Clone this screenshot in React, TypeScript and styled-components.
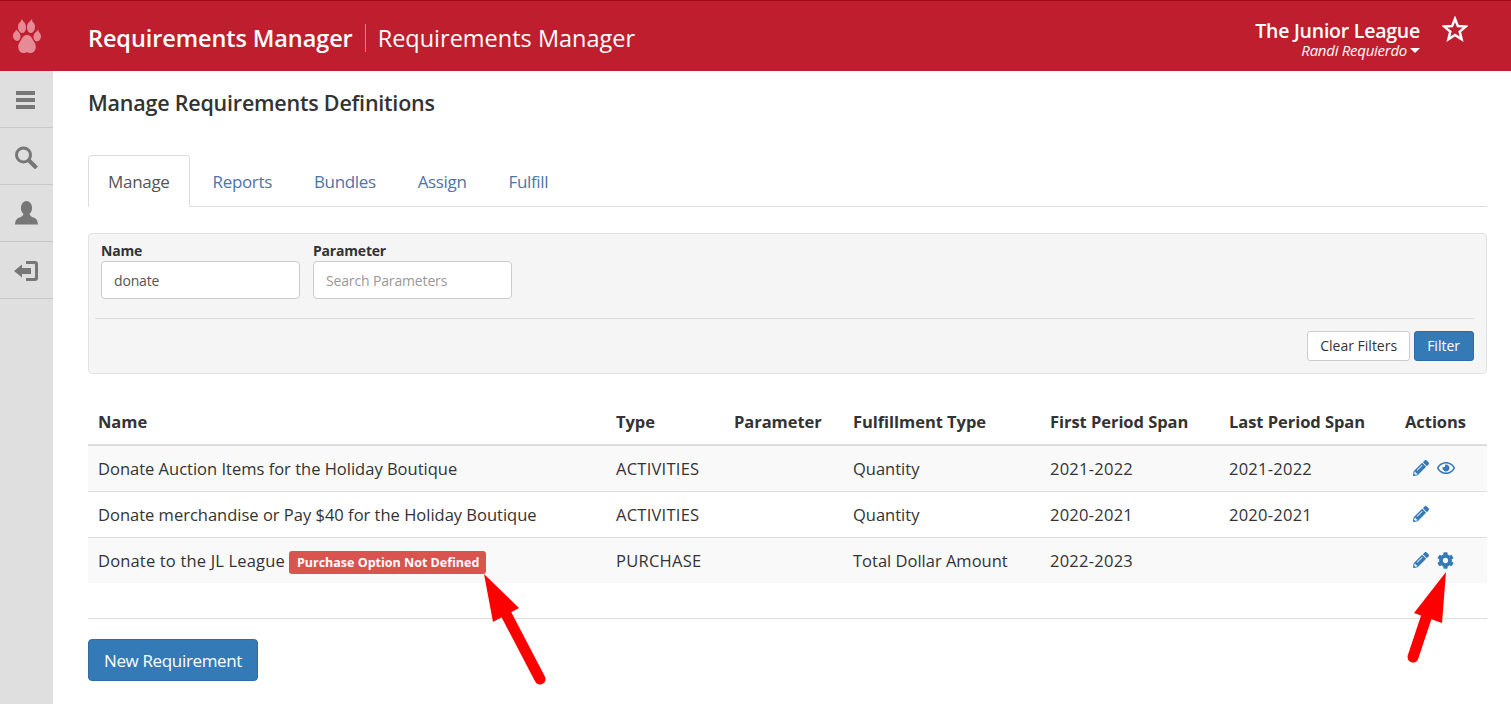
import React from 'react';
import styled, { createGlobalStyle } from 'styled-components';
import { FaRegEye, FaCog, FaPencilAlt } from 'react-icons/fa';

const Global = createGlobalStyle`
  html, body { margin: 0; padding: 0; background: #fff; }
  body { font-family: "Open Sans", "Noto Sans", "Liberation Sans", sans-serif; color: #333; font-size: 16px; }
  * { box-sizing: border-box; }
`;

const Page = styled.div`
  position: relative;
  width: 1511px;
  height: 704px;
  overflow: hidden;
  display: flex;
  flex-direction: column;
`;

const Header = styled.header`
  height: 71px;
  flex: none;
  background: #be1e2d;
  border-top: 1px solid #a00a12;
  display: flex;
  align-items: center;
  color: #fff;
`;

const LogoCell = styled.div`
  width: 53px;
  flex: none;
  display: flex;
  justify-content: center;
  padding-bottom: 1px;
`;

const Titles = styled.div`
  flex: 1;
  display: flex;
  align-items: center;
  padding-left: 35px;
  padding-top: 4px;
`;

const AppTitle = styled.span`
  font-size: 23.5px;
  font-weight: 600;
  letter-spacing: -0.1px;
  padding-right: 12px;
  border-right: 1px solid rgba(255, 255, 255, 0.45);
  line-height: 28px;
`;

const SubTitle = styled.span`
  font-size: 23.5px;
  font-weight: 400;
  padding-left: 12px;
`;

const Account = styled.div`
  display: flex;
  flex-direction: column;
  align-items: flex-end;
  margin-right: 22px;
  padding-top: 5px;
`;

const League = styled.div`
  font-size: 19.5px;
  font-weight: 600;
  letter-spacing: -0.23px;
  line-height: 23px;
`;

const UserName = styled.div`
  font-size: 15px;
  font-style: italic;
  letter-spacing: -0.27px;
  line-height: 17px;
  display: flex;
  align-items: center;
  gap: 3px;
`;

const Caret = styled.span`
  width: 0;
  height: 0;
  border-left: 5px solid transparent;
  border-right: 5px solid transparent;
  border-top: 5px solid #fff;
`;

const StarCell = styled.div`
  width: 26px;
  margin-right: 43px;
  margin-bottom: 14px;
  display: flex;
`;

const Body = styled.div`
  flex: 1;
  display: flex;
  min-height: 0;
`;

const Sidebar = styled.nav`
  width: 53px;
  flex: none;
  background: #dfdfdf;
  display: flex;
  flex-direction: column;
`;

const SideItem = styled.div`
  height: 57px;
  border-bottom: 1px solid #c8c8c8;
  display: flex;
  align-items: center;
  justify-content: center;
  & svg { display: block; }
`;

const Main = styled.main`
  flex: 1;
  padding: 0 24px 0 35px;
`;

const PageTitle = styled.h1`
  margin: 0;
  height: 84px;
  padding-top: 18px;
  font-size: 21.5px;
  line-height: 28px;
  font-weight: 600;
  letter-spacing: -0.22px;
  color: #333;
`;

const Tabs = styled.div`
  display: flex;
  height: 52px;
  border-bottom: 1px solid #ddd;
`;

const Tab = styled.div<{ $active?: boolean }>`
  height: 52px;
  padding: 0 ${p => (p.$active ? '19px' : '18px')} 0 ${p => (p.$active ? '19px' : '22px')};
  display: flex;
  align-items: center;
  font-size: 17px;
  letter-spacing: ${p => (p.$active ? '-0.3px' : '-0.35px')};
  color: ${p => (p.$active ? '#555' : '#4f74a8')};
  background: ${p => (p.$active ? '#fff' : 'transparent')};
  border: 1px solid ${p => (p.$active ? '#ddd' : 'transparent')};
  border-bottom-color: ${p => (p.$active ? '#fff' : 'transparent')};
  border-radius: 4px 4px 0 0;
`;

const FilterPanel = styled.section`
  margin-top: 26px;
  height: 141px;
  background: #f5f5f5;
  border: 1px solid #e3e3e3;
  border-radius: 4px;
  padding: 7px 12px 0 6px;
  display: flex;
  flex-direction: column;
`;

const Fields = styled.div`
  display: flex;
  gap: 13px;
  padding-left: 6px;
  height: 77px;
`;

const Field = styled.label`
  display: flex;
  flex-direction: column;
  width: 199px;
`;

const FieldLabel = styled.span`
  font-size: 14px;
  font-weight: 700;
  letter-spacing: -0.2px;
  line-height: 20px;
  color: #333;
`;

const Input = styled.input`
  height: 38px;
  width: 199px;
  border: 1px solid #ccc;
  border-radius: 4px;
  background: #fff;
  padding: 0 12px;
  font: inherit;
  font-size: 14px;
  letter-spacing: -0.15px;
  color: #555;
  outline: none;
  &::placeholder { color: #999; opacity: 1; }
`;

const PanelActions = styled.div`
  border-top: 1px solid #ddd;
  flex: 1;
  display: flex;
  justify-content: flex-end;
  align-items: flex-start;
  gap: 4px;
  padding-top: 12px;
`;

const SmallButton = styled.button<{ $primary?: boolean }>`
  height: 30px;
  padding: 0 ${p => (p.$primary ? '13px' : '12px')} 2px 12px;
  border-radius: 3px;
  border: 1px solid ${p => (p.$primary ? '#2e6da4' : '#ccc')};
  background: ${p => (p.$primary ? '#337ab7' : '#fff')};
  color: ${p => (p.$primary ? '#fff' : '#333')};
  font: inherit;
  font-size: 14px;
`;

const Table = styled.table`
  margin-top: 27px;
  width: 1399px;
  border-collapse: collapse;
  table-layout: fixed;
  font-size: 16.5px;
`;

const HeadCell = styled.th`
  height: 44px;
  padding: 0 10px 2px;
  text-align: left;
  font-weight: 700;
  font-size: 16.5px;
  letter-spacing: -0.05px;
  border-bottom: 2px solid #ddd;
`;

const Row = styled.tr<{ $striped?: boolean }>`
  height: 46px;
  background: ${p => (p.$striped ? '#f9f9f9' : '#fff')};
`;

const Cell = styled.td<{ $wide?: boolean }>`
  padding: 0 10px;
  white-space: nowrap;
  overflow: visible;
  letter-spacing: ${p => (p.$wide ? '0.25px' : '0')};
  tr:not(:first-child) > & { border-top: 1px solid #ddd; }
`;

const NameWithBadge = styled.div`
  display: flex;
  align-items: center;
  gap: 4px;
  letter-spacing: 0.17px;
`;

const Badge = styled.span`
  background: #d9534f;
  color: #fff;
  font-size: 12.5px;
  font-weight: 700;
  letter-spacing: 0;
  line-height: 23px;
  height: 23px;
  margin-top: 5px;
  padding: 0 7px 0 8px;
  border-radius: 3px;
`;

const IconRow = styled.div`
  display: flex;
  align-items: center;
  gap: 8px;
  padding-left: 8px;
  color: #337ab7;
  font-size: 16px;
  & svg { display: block; }
`;

const Footer = styled.div`
  margin-top: 35px;
  border-top: 1px solid #ddd;
  padding-top: 20px;
`;

const PrimaryButton = styled.button`
  height: 42px;
  width: 170px;
  border-radius: 4px;
  border: 1px solid #2e6da4;
  background: #337ab7;
  color: #fff;
  font: inherit;
  font-size: 17px;
  letter-spacing: -0.35px;
`;

const ArrowLayer = styled.svg`
  position: absolute;
  inset: 0;
  pointer-events: none;
`;

const Paw = () => (
  <svg width="34" height="40" viewBox="10 16 34 40" fill="#e68a96">
    <path d="M16 29.500l1.500 1.500c1.800 1.300 3 3.200 3 5.300 0 2.700-1.300 4.600-3.200 4.600-2.300 0-4.300-2.400-4.300-5.200 0-1.700.9-3.400 2.300-4.300z" />
    <path d="M22 19l1.300 2.500c1.700 1.200 2.700 3.400 2.700 5.800 0 3.200-1.500 5.700-3.600 5.700-2.400 0-4.400-2.700-4.400-6 0-2.300 1-4.300 2.700-5.400z" />
    <path d="M32 19l.3 2.600c1.700 1.100 2.700 3.100 2.700 5.400 0 3.300-2 6-4.400 6-2.100 0-3.600-2.500-3.600-5.700 0-2.400 1-4.600 2.700-5.800z" />
    <path d="M38.500 29.500l.2 2.400c1.400.9 2.300 2.600 2.300 4.300 0 2.800-2 5.200-4.300 5.200-1.900 0-3.200-1.900-3.200-4.600 0-2.100 1.200-4 3-5.300z" />
    <path d="M27 35c3.300 0 4.700 2.600 5.800 4.800 1.200 2.300 3 3.700 3 7 0 3.400-2.200 6.200-4.800 6.200-1.800 0-2.700-.8-4-.8s-2.200.8-4 .8c-2.600 0-4.800-2.800-4.800-6.200 0-3.300 1.800-4.700 3-7C22.300 37.600 23.700 35 27 35z" />
  </svg>
);

const Star = () => (
  <svg width="26" height="26" viewBox="0 0 26 26">
    <path d="M13 2.800l2.900 7.300 7.800.5-6 5 1.900 7.600L13 19l-6.600 4.200 1.900-7.600-6-5 7.800-.5z" fill="none" stroke="#fff" strokeWidth="2.500" strokeLinejoin="miter" />
  </svg>
);

const MenuIcon = () => (
  <svg width="27" height="22" viewBox="0 0 27 22" fill="#777">
    <rect x="3" y="3" width="19" height="4" />
    <rect x="3" y="10" width="19" height="4" />
    <rect x="3" y="17" width="19" height="4" />
  </svg>
);

const SearchIcon = () => (
  <svg width="26" height="26" viewBox="0 0 26 26" fill="none" stroke="#777">
    <circle cx="9.500" cy="12" r="7" strokeWidth="3" />
    <path d="M15 17.500l7.500 7.500" strokeWidth="4" />
  </svg>
);

const UserIcon = () => (
  <svg width="26" height="24" viewBox="0 0 26 24" fill="#777">
    <ellipse cx="12.500" cy="7" rx="5.600" ry="7" />
    <path d="M9.500 12.500c-.3 2.500-2 3.200-4.500 4.300C3 17.700 1.300 19 1 23.500h23c-.3-4.500-2-5.800-4-6.700-2.500-1.100-4.200-1.800-4.500-4.300z" />
  </svg>
);

const LogIn = () => (
  <svg width="26" height="24" viewBox="0 -2 26 24" fill="#777">
    <path d="M12 1h9a3 3 0 0 1 3 3v14a3 3 0 0 1-3 3h-9v-3h8.200a.8.8 0 0 0 .8-.8V4.800a.8.8 0 0 0-.8-.8H12z" />
    <path d="M0 11l8-6.500V8h9v6H8v3.500z" />
  </svg>
);

const columns = [518, 118, 119, 197, 179, 176, 92];
const heads = ['Name', 'Type', 'Parameter', 'Fulfillment Type', 'First Period Span', 'Last Period Span', 'Actions'];

export default function App() {
  return (
    <Page>
      <Global />
      <Header>
        <LogoCell><Paw /></LogoCell>
        <Titles>
          <AppTitle>Requirements Manager</AppTitle>
          <SubTitle>Requirements Manager</SubTitle>
        </Titles>
        <Account>
          <League>The Junior League</League>
          <UserName>Randi Requierdo <Caret /></UserName>
        </Account>
        <StarCell><Star /></StarCell>
      </Header>
      <Body>
        <Sidebar>
          <SideItem><MenuIcon /></SideItem>
          <SideItem><SearchIcon /></SideItem>
          <SideItem><UserIcon /></SideItem>
          <SideItem><LogIn /></SideItem>
        </Sidebar>
        <Main>
          <PageTitle>Manage Requirements Definitions</PageTitle>
          <Tabs>
            <Tab $active>Manage</Tab>
            <Tab>Reports</Tab>
            <Tab>Bundles</Tab>
            <Tab>Assign</Tab>
            <Tab>Fulfill</Tab>
          </Tabs>
          <FilterPanel>
            <Fields>
              <Field>
                <FieldLabel>Name</FieldLabel>
                <Input defaultValue="donate" />
              </Field>
              <Field>
                <FieldLabel>Parameter</FieldLabel>
                <Input placeholder="Search Parameters" />
              </Field>
            </Fields>
            <PanelActions>
              <SmallButton>Clear Filters</SmallButton>
              <SmallButton $primary>Filter</SmallButton>
            </PanelActions>
          </FilterPanel>
          <Table>
            <colgroup>
              {columns.map((w, i) => <col key={i} width={w} />)}
            </colgroup>
            <thead>
              <tr>{heads.map(h => <HeadCell key={h}>{h}</HeadCell>)}</tr>
            </thead>
            <tbody>
              <Row $striped>
                <Cell>Donate Auction Items for the Holiday Boutique</Cell>
                <Cell $wide>ACTIVITIES</Cell>
                <Cell />
                <Cell>Quantity</Cell>
                <Cell $wide>2021-2022</Cell>
                <Cell $wide>2021-2022</Cell>
                <Cell><IconRow><FaPencilAlt /><FaRegEye size={18} /></IconRow></Cell>
              </Row>
              <Row>
                <Cell>Donate merchandise or Pay $40 for the Holiday Boutique</Cell>
                <Cell $wide>ACTIVITIES</Cell>
                <Cell />
                <Cell>Quantity</Cell>
                <Cell $wide>2020-2021</Cell>
                <Cell $wide>2020-2021</Cell>
                <Cell><IconRow><FaPencilAlt /></IconRow></Cell>
              </Row>
              <Row $striped>
                <Cell><NameWithBadge>Donate to the JL League<Badge>Purchase Option Not Defined</Badge></NameWithBadge></Cell>
                <Cell $wide>PURCHASE</Cell>
                <Cell />
                <Cell>Total Dollar Amount</Cell>
                <Cell $wide>2022-2023</Cell>
                <Cell />
                <Cell><IconRow><FaPencilAlt /><FaCog size={17} /></IconRow></Cell>
              </Row>
            </tbody>
          </Table>
          <Footer>
            <PrimaryButton>New Requirement</PrimaryButton>
          </Footer>
        </Main>
      </Body>
      <ArrowLayer width="1511" height="704" viewBox="0 0 1511 704">
        <path d="M484 574L519 608 493 622z" fill="#f00" />
        <path d="M505 612L540 679" stroke="#f00" strokeWidth="11" strokeLinecap="round" fill="none" />
        <path d="M1446 572L1414 613 1442 623z" fill="#f00" />
        <path d="M1427 615L1413 657" stroke="#f00" strokeWidth="11" strokeLinecap="round" fill="none" />
      </ArrowLayer>
    </Page>
  );
}
